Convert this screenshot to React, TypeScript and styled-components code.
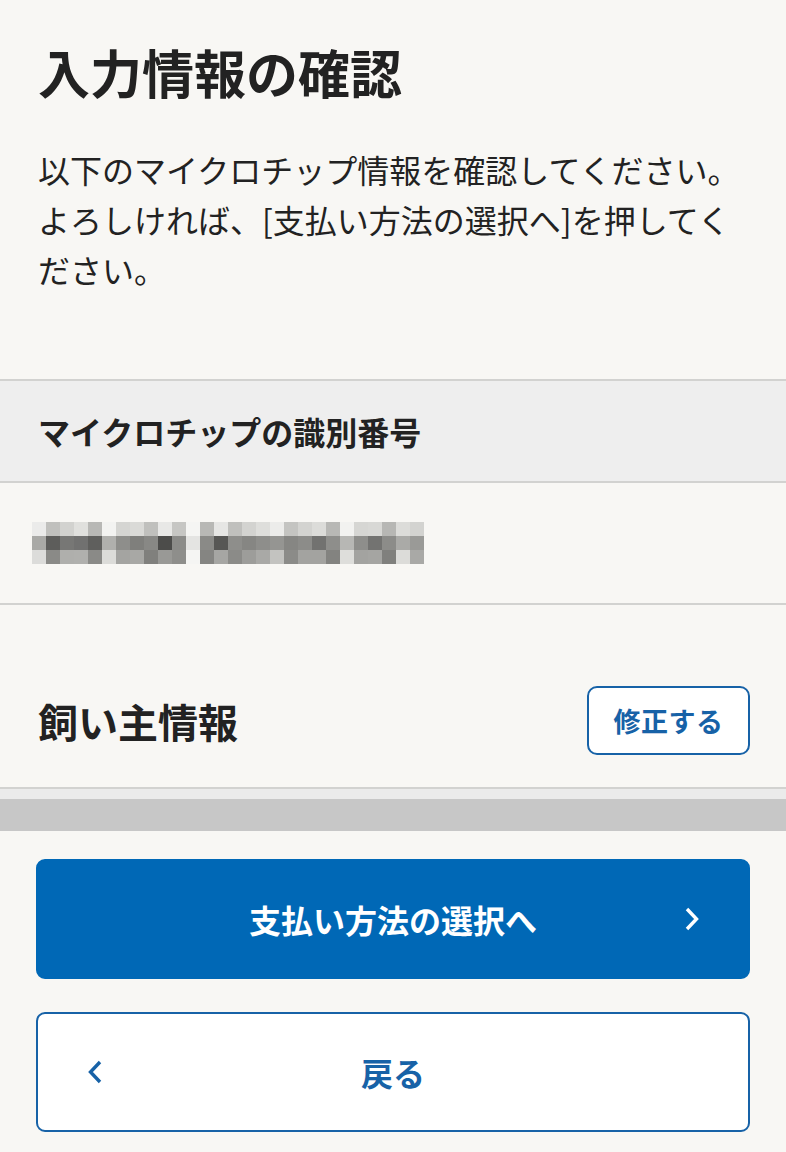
import { createGlobalStyle } from 'styled-components'
import styled from 'styled-components'

const colors = {
  body: '#f8f7f4',
  text: '#222222',
  band: '#eeeeee',
  line: '#d2d2d0',
  shadeLight: '#ebebeb',
  shade: '#c7c7c7',
  blue: '#0068b6',
  blueText: '#1762a7',
  white: '#ffffff',
}

// mosaic that hides the microchip number (3 rows x 28 cells)
const MOSAIC = [
  'ebebea c0c0bd d2d2cf e0e0dd b8b8b5 f3f3f1 d5d5d2 dadad7 c0c0bd e8e8e6 c6c6c3 f5f5f3 b8b8b5 e6e6e4 c0c0bd d3d3d0 dededb ececea c4c4c1 d3d3d0 dcdcd9 b8b8b5 f2f2f0 d6d6d3 d8d8d5 b7b7b4 dcdcd9 d3d3d0',
  'a9a9a6 5d5d5b 777775 717170 5f5f5d b0b0ad 8e8e8b 7f7f7c 888885 4c4c4a 8b8b88 e4e4e2 8a8a87 575755 8e8e8b 868683 8e8e8b 959592 868683 8c8c89 727270 8e8e8b b7b7b4 8e8e8b 737371 8c8c89 aaaaa7 9a9a97',
  'dcdcda 8a8a87 afafac b0b0ad 8a8a87 dcdcd9 a4a4a1 a8a8a5 80807d 999996 8e8e8b f5f5f3 858582 a6a6a3 8b8b88 9d9d9a a9a9a6 c3c3c0 8b8b88 a3a3a0 a3a3a0 838380 dededb a3a3a0 a5a5a2 80807d dcdcd9 a9a9a6',
].map((row) => row.split(' '))

const CELL = 14

const GlobalStyle = createGlobalStyle`
  html, body {
    margin: 0;
    padding: 0;
    background: ${colors.body};
  }
  body {
    font-family: "Noto Sans CJK JP", "Noto Sans", sans-serif;
    color: ${colors.text};
  }
  * {
    box-sizing: border-box;
  }
`

const Mosaic = () => (
  <svg width={CELL * 28} height={CELL * 3} viewBox={`0 0 ${CELL * 28} ${CELL * 3}`} shapeRendering="crispEdges">
    {MOSAIC.map((row, r) =>
      row.map((c, i) => <rect key={`${r}-${i}`} x={i * CELL} y={r * CELL} width={CELL} height={CELL} fill={`#${c}`} />),
    )}
  </svg>
)

const Chevron = ({ dir }: { dir: 'left' | 'right' }) => (
  <svg width="16" height="24" viewBox="0 0 16 24" fill="none">
    <polyline
      points={dir === 'right' ? '3,2 12.5,12 3,22' : '13,2 3.5,12 13,22'}
      stroke="currentColor"
      strokeWidth="3.4"
      strokeLinejoin="miter"
    />
  </svg>
)

export default function App() {
  return (
    <>
      <GlobalStyle />
      <Page>
        <Intro>
          <Title>入力情報の確認</Title>
          <Lead>以下のマイクロチップ情報を確認してください。よろしければ、[支払い方法の選択へ]を押してください。</Lead>
        </Intro>

        <Section>
          <SectionHeader>マイクロチップの識別番号</SectionHeader>
          <SectionValue>
            <Mosaic />
          </SectionValue>
        </Section>

        <OwnerRow>
          <OwnerTitle>飼い主情報</OwnerTitle>
          <EditButton type="button">修正する</EditButton>
        </OwnerRow>

        <Shade />

        <Footer>
          <ActionButton type="button" $variant="primary">
            <span>支払い方法の選択へ</span>
            <IconSlot $side="right">
              <Chevron dir="right" />
            </IconSlot>
          </ActionButton>
          <ActionButton type="button" $variant="outline">
            <IconSlot $side="left">
              <Chevron dir="left" />
            </IconSlot>
            <span>戻る</span>
          </ActionButton>
        </Footer>
      </Page>
    </>
  )
}

const Page = styled.main`
  display: flex;
  flex-direction: column;
  width: 786px;
  min-height: 1152px;
  background: ${colors.body};
`

const Intro = styled.div`
  display: flex;
  flex-direction: column;
  padding: 36px 38px 0 38px;
`

const Title = styled.h1`
  margin: 0;
  font-size: 52px;
  line-height: 72px;
  font-weight: 700;
`

const Lead = styled.p`
  margin: 36px 0 0;
  width: 705px;
  font-size: 32px;
  line-height: 50px;
  font-weight: 400;
`

const Section = styled.section`
  display: flex;
  flex-direction: column;
  margin-top: 85px;
  border-top: 2px solid ${colors.line};
  border-bottom: 2px solid ${colors.line};
`

const SectionHeader = styled.h2`
  display: flex;
  align-items: center;
  height: 102px;
  margin: 0;
  padding: 0 38px;
  background: ${colors.band};
  border-bottom: 2px solid ${colors.line};
  font-size: 32px;
  font-weight: 700;
`

const SectionValue = styled.div`
  display: flex;
  align-items: center;
  height: 120px;
  padding: 0 32px;
`

const OwnerRow = styled.div`
  display: flex;
  align-items: center;
  justify-content: space-between;
  padding: 81px 36px 32px 38px;
  border-bottom: 2px solid ${colors.line};
`

const OwnerTitle = styled.h2`
  margin: 0;
  font-size: 40px;
  line-height: 1.2;
  font-weight: 700;
`

const EditButton = styled.button`
  width: 163px;
  height: 69px;
  border: 2px solid ${colors.blueText};
  border-radius: 10px;
  background: ${colors.white};
  color: ${colors.blueText};
  font-family: inherit;
  font-size: 27px;
  font-weight: 700;
  letter-spacing: 0.5px;
  cursor: pointer;
`

const Shade = styled.div`
  height: 42px;
  border-top: 10px solid ${colors.shadeLight};
  background: ${colors.shade};
`

const Footer = styled.div`
  display: flex;
  flex-direction: column;
  gap: 33px;
  padding: 28px 36px 21px;
`

const ActionButton = styled.button<{ $variant: 'primary' | 'outline' }>`
  position: relative;
  display: flex;
  align-items: center;
  justify-content: center;
  width: 100%;
  height: 120px;
  border-radius: 9px;
  border: 2px solid ${({ $variant }) => ($variant === 'primary' ? colors.blue : colors.blueText)};
  background: ${({ $variant }) => ($variant === 'primary' ? colors.blue : colors.white)};
  color: ${({ $variant }) => ($variant === 'primary' ? colors.white : colors.blueText)};
  font-family: inherit;
  font-size: 32px;
  font-weight: 700;
  cursor: pointer;
`

const IconSlot = styled.span<{ $side: 'left' | 'right' }>`
  position: absolute;
  top: 50%;
  transform: translateY(-50%);
  display: flex;
  ${({ $side }) => ($side === 'right' ? 'right: 48px;' : 'left: 49px;')}
`
